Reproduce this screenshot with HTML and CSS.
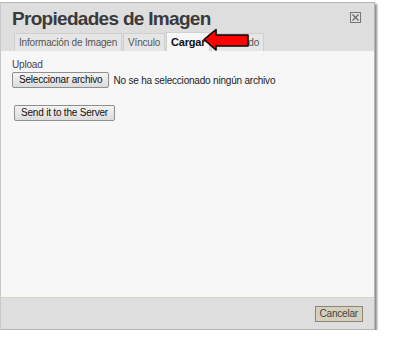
FILE: index.html
```html
<!DOCTYPE html>
<html lang="es">
<head>
  <meta charset="UTF-8">
  <title>Propiedades de Imagen</title>
  <link rel="stylesheet" href="styles.css">
</head>
<body>
  <div class="dialog">
    <div class="title-bar">
      <h1>Propiedades de Imagen</h1>
      <span class="close">
        <svg width="11" height="11" viewBox="0 0 11 11">
          <rect x="0.5" y="0.5" width="10" height="10" fill="none" stroke="#777"/>
          <path d="M2.5 2.5 L8.5 8.5 M8.5 2.5 L2.5 8.5" stroke="#666" stroke-width="1.2"/>
        </svg>
      </span>
    </div>
    <div class="tabs">
      <span class="tab">Información de Imagen</span>
      <span class="tab">Vínculo</span>
      <span class="tab active">Cargar</span>
      <span class="tab">Avanzado</span>
      <svg class="arrow" width="48" height="24" viewBox="0 0 48 24">
        <path d="M2 11.5 L14 1.5 L14 7 L46 7 L46 18 L14 18 L14 22 Z" fill="#f00" stroke="#000" stroke-width="1.6" stroke-linejoin="round"/>
      </svg>
    </div>
    <div class="body">
      <div class="label">Upload</div>
      <div class="file-row">
        <button class="btn">Seleccionar archivo</button>
        <span>No se ha seleccionado ningún archivo</span>
      </div>
      <button class="btn send">Send it to the Server</button>
    </div>
    <div class="footer">
      <button class="cancel">Cancelar</button>
    </div>
  </div>
</body>
</html>
```

FILE: styles.css
```css
body {
  margin: 0;
  background: #fff;
  font-family: "Liberation Sans", Arial, sans-serif;
  font-size: 10px;
  letter-spacing: -0.2px;
  color: #222;
}

.dialog {
  width: 373px;
  height: 326px;
  margin-top: 2px;
  border: 1px solid #b5b5b5;
  border-left-color: #c8c8c8;
  box-shadow: 2px 2px 2px #8c8c8c;
  display: flex;
  flex-direction: column;
  background: #dedede;
}

.title-bar {
  display: flex;
  justify-content: space-between;
  align-items: flex-start;
  padding: 4px 13px 0 11px;
  height: 24px;
}

.title-bar h1 {
  margin: 0;
  font-size: 19px;
  letter-spacing: -0.7px;
  font-weight: bold;
  color: #3a3a3a;
  line-height: 23px;
}

.close {
  margin-top: 5px;
  line-height: 0;
}

.tabs {
  position: relative;
  display: flex;
  padding-left: 13px;
  height: 20px;
  align-items: flex-end;
}

.tab {
  border: 1px solid #cfcfcf;
  border-bottom: none;
  background: #e6e6e6;
  color: #555;
  padding: 0 4px;
  height: 17px;
  line-height: 17px;
  margin-right: 1px;
}

.tab.active {
  background: #f7f7f7;
  color: #111;
  font-weight: bold;
  font-size: 11px;
  height: 18px;
  line-height: 18px;
}

.arrow {
  position: absolute;
  left: 201px;
  top: -3px;
}

.body {
  flex: 1;
  background: #f7f7f7;
  border-bottom: 1px solid #d8d2c2;
  padding: 8px 11px;
}

.label {
  color: #4b3a5a;
  margin-bottom: 2px;
}

.file-row {
  display: flex;
  align-items: center;
  gap: 4px;
}

.btn {
  font-family: inherit;
  font-size: 10px;
  letter-spacing: -0.2px;
  color: #111;
  background: linear-gradient(#f4f4f4, #dcdcdc);
  border: 1px solid #8e8e8e;
  border-radius: 2px;
  padding: 1px 6px;
  height: 16px;
  line-height: 12px;
}

.send {
  margin-top: 17px;
  margin-left: 2px;
}

.footer {
  height: 31px;
  display: flex;
  justify-content: flex-end;
  align-items: center;
  padding-right: 11px;
}

.cancel {
  font-family: inherit;
  font-size: 10px;
  letter-spacing: -0.2px;
  color: #444;
  background: #d6cfbd;
  border: 1px solid #8c8677;
  padding: 1px 4px;
  height: 16px;
  line-height: 12px;
}
```
